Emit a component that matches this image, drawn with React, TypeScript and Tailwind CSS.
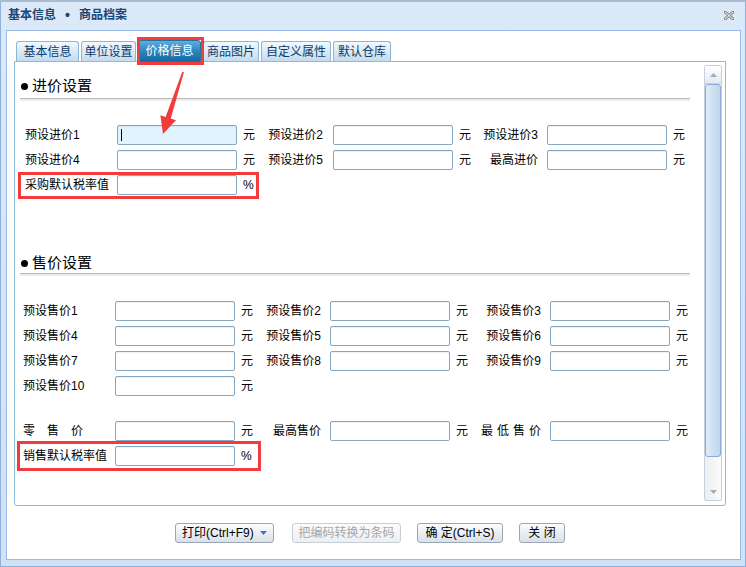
import React from "react";

function Inp({ focused }: { focused?: boolean }) {
  return (
    <div
      className={
        "relative w-[120px] h-[20px] rounded-[2px] border border-[#84a6c0] shadow-[inset_0_1px_1px_rgba(0,0,0,0.06)] " +
        (focused ? "bg-[#e1f4fd]" : "bg-white")
      }
    >
      {focused && <div className="absolute left-[3px] top-[3px] w-[1px] h-[12px] bg-black" />}
    </div>
  );
}

function Mid({ w, unit, label, pr, spaced }: { w: string; unit: string; label: string; pr: string; spaced?: boolean }) {
  return (
    <div className={"flex items-center justify-between h-[20px] " + w}>
      <span className="pl-[6px]">{unit}</span>
      <span className={pr + (spaced ? " tracking-[4px]" : "")}>{label}</span>
    </div>
  );
}

function Heading({ text, mt }: { text: string; mt: string }) {
  return (
    <div className={mt}>
      <div className="flex items-center h-[20px]">
        <div className="ml-[1px] mr-[4px] w-[7px] h-[7px] rounded-full bg-black" />
        <span className="text-[15px] leading-[20px]">{text}</span>
      </div>
      <div className="w-[670px] h-[1px] bg-[#b9b9b9] mt-[2px]" />
      <div className="w-[670px] h-[2px] bg-[#ececec]" />
    </div>
  );
}

function Tab({ label, w, active }: { label: string; w: string; active?: boolean }) {
  if (active)
    return (
      <div
        className={
          "relative z-10 -mb-[1px] h-[22px] flex items-center justify-center rounded-t-[3px] border border-[#2c6e9c] bg-gradient-to-b from-[#5cb0de] via-[#2b86bf] to-[#156ba4] text-white text-[12px] " +
          w
        }
      >
        {label}
      </div>
    );
  return (
    <div
      className={
        "h-[20px] flex items-center justify-center rounded-t-[3px] border border-b-0 border-[#8db5d4] bg-gradient-to-b from-[#f3f8fd] to-[#c3dbf0] text-[#0c3c69] text-[12px] " +
        w
      }
    >
      {label}
    </div>
  );
}

export default function App() {
  return (
    <div className="relative w-[746px] h-[567px] overflow-hidden bg-[#d3e3f5] font-['Liberation_Sans','Noto_Sans_CJK_SC',sans-serif] text-[12px] text-black">
      <div className="h-[2px] bg-[#a9bccf]" />
      <div className="flex flex-col h-[565px] border-x border-b border-[#8eb0d9] bg-gradient-to-b from-[#dce9f8] to-[#d0e2f4] pl-[5px] pr-[4px] pb-[6px]">
        {/* title bar */}
        <div className="h-[28px] flex items-center justify-between pl-[2px] pr-[7px] pb-[2px]">
          <div className="flex items-center font-bold text-[12px] text-[#1a4577]">
            <span>基本信息</span>
            <span className="mx-[9px] text-[14px] leading-none">•</span>
            <span>商品档案</span>
          </div>
          <svg width="10" height="9" viewBox="0 0 10 9">
            <path d="M1 1 L9 8 M9 1 L1 8" stroke="#8c8c8c" strokeWidth="3" strokeLinecap="square" />
            <path d="M1 1 L9 8 M9 1 L1 8" stroke="#f4f4f4" strokeWidth="1" />
          </svg>
        </div>

        {/* white panel */}
        <div className="flex-1 bg-white border border-[#99bbe8] flex flex-col">
          {/* tabs */}
          <div className="mt-[9px] ml-[9px] h-[21px] flex items-end gap-[2px]">
            <Tab label="基本信息" w="w-[63px]" />
            <Tab label="单位设置" w="w-[55px]" />
            <Tab label="价格信息" w="w-[63px]" active />
            <Tab label="商品图片" w="w-[56px]" />
            <Tab label="自定义属性" w="w-[70px]" />
            <Tab label="默认仓库" w="w-[58px]" />
          </div>

          {/* content box */}
          <div className="ml-[7px] w-[712px] h-[445px] border border-[#8fbad6] rounded-b-[3px] flex">
            <div className="flex-1 pl-[5px]">
              <Heading text="进价设置" mt="mt-[14px]" />
              <div className="mt-[24px] flex flex-col gap-[5px]">
                <div className="flex items-center h-[20px] pl-[5px]">
                  <span className="w-[92px]">预设进价1</span>
                  <Inp focused />
                  <Mid w="w-[96px]" unit="元" label="预设进价2" pr="pr-[10px]" />
                  <Inp />
                  <Mid w="w-[94px]" unit="元" label="预设进价3" pr="pr-[9px]" />
                  <Inp />
                  <span className="pl-[6px]">元</span>
                </div>
                <div className="flex items-center h-[20px] pl-[5px]">
                  <span className="w-[92px]">预设进价4</span>
                  <Inp />
                  <Mid w="w-[96px]" unit="元" label="预设进价5" pr="pr-[10px]" />
                  <Inp />
                  <Mid w="w-[94px]" unit="元" label="最高进价" pr="pr-[9px]" />
                  <Inp />
                  <span className="pl-[6px]">元</span>
                </div>
                <div className="flex items-center h-[20px] pl-[5px]">
                  <span className="w-[92px]">采购默认税率值</span>
                  <Inp />
                  <span className="pl-[6px]">%</span>
                </div>
              </div>

              <div className="mt-[58px]">
                <div className="flex items-center h-[20px]">
                  <div className="ml-[1px] mr-[4px] w-[7px] h-[7px] rounded-full bg-black" />
                  <span className="text-[15px] leading-[20px]">售价设置</span>
                </div>
                <div className="w-[670px] h-[1px] bg-[#b9b9b9]" />
                <div className="w-[670px] h-[2px] bg-[#ececec]" />
              </div>

              <div className="mt-[25px] flex flex-col gap-[5px]">
                {[
                  ["预设售价1", "预设售价2", "预设售价3"],
                  ["预设售价4", "预设售价5", "预设售价6"],
                  ["预设售价7", "预设售价8", "预设售价9"],
                ].map((r) => (
                  <div key={r[0]} className="flex items-center h-[20px] pl-[3px]">
                    <span className="w-[92px]">{r[0]}</span>
                    <Inp />
                    <Mid w="w-[95px]" unit="元" label={r[1]} pr="pr-[9px]" />
                    <Inp />
                    <Mid w="w-[100px]" unit="元" label={r[2]} pr="pr-[9px]" />
                    <Inp />
                    <span className="pl-[6px]">元</span>
                  </div>
                ))}
                <div className="flex items-center h-[20px] pl-[3px]">
                  <span className="w-[92px]">预设售价10</span>
                  <Inp />
                  <span className="pl-[6px]">元</span>
                </div>
              </div>

              <div className="mt-[25px] flex flex-col gap-[5px]">
                <div className="flex items-center h-[20px] pl-[3px]">
                  <span className="w-[92px]">零　售　价</span>
                  <Inp />
                  <Mid w="w-[95px]" unit="元" label="最高售价" pr="pr-[9px]" />
                  <Inp />
                  <Mid w="w-[100px]" unit="元" label="最低售价" pr="pr-[5px]" spaced />
                  <Inp />
                  <span className="pl-[6px]">元</span>
                </div>
                <div className="flex items-center h-[20px] pl-[3px]">
                  <span className="w-[92px]">销售默认税率值</span>
                  <Inp />
                  <span className="pl-[6px]">%</span>
                </div>
              </div>
            </div>

            {/* scrollbar */}
            <div className="mt-[3px] mb-[4px] mr-[3px] w-[18px] flex flex-col border border-[#c5d1df] rounded-[2px] bg-gradient-to-r from-[#eeeeee] to-[#fbfbfb]">
              <div className="h-[18px] flex items-center justify-center bg-gradient-to-b from-white to-[#e4eaf2] border-b border-[#c5d1df]">
                <svg width="7" height="4" viewBox="0 0 7 4">
                  <polygon points="3.5,0 7,4 0,4" fill="#a3abb6" />
                </svg>
              </div>
              <div className="h-[373px] rounded-[3px] border border-[#8fa8d8] bg-gradient-to-r from-[#e2edf8] via-[#cde0f2] to-[#c0d6ee]" />
              <div className="flex-1 flex items-end justify-center pb-[6px]">
                <svg width="7" height="4" viewBox="0 0 7 4">
                  <polygon points="0,0 7,0 3.5,4" fill="#a3abb6" />
                </svg>
              </div>
            </div>
          </div>

          {/* buttons */}
          <div className="mt-[17px] pl-[168px] flex items-center">
            <div className="w-[99px] h-[20px] flex items-center justify-between pl-[6px] pr-[6px] border border-[#9aa6b3] rounded-[3px] bg-gradient-to-b from-[#fcfdfe] to-[#d9e0e8]">
              <span>打印(Ctrl+F9)</span>
              <svg width="7" height="4" viewBox="0 0 7 4">
                <polygon points="0,0 7,0 3.5,4" fill="#3f78c0" />
              </svg>
            </div>
            <div className="ml-[18px] w-[109px] h-[20px] flex items-center justify-center border border-[#c8ced5] rounded-[3px] bg-gradient-to-b from-[#fcfcfc] to-[#eceff2] text-[#a6a6a6]">
              把编码转换为条码
            </div>
            <div className="ml-[16px] w-[86px] h-[20px] flex items-center justify-center border border-[#9aa6b3] rounded-[3px] bg-gradient-to-b from-[#fcfdfe] to-[#d9e0e8]">
              确 定(Ctrl+S)
            </div>
            <div className="ml-[16px] w-[46px] h-[20px] flex items-center justify-center border border-[#9aa6b3] rounded-[3px] bg-gradient-to-b from-[#fcfdfe] to-[#d9e0e8]">
              关 闭
            </div>
          </div>
        </div>
      </div>

      {/* annotations */}
      <div className="absolute left-[137px] top-[37px] w-[67px] h-[28px] border-[3px] border-[#f23b3b] z-20" />
      <div className="absolute left-[18px] top-[172px] w-[241px] h-[27px] border-[3px] border-[#f23b3b]" />
      <div className="absolute left-[17px] top-[441px] w-[244px] h-[30px] border-[3px] border-[#f23b3b]" />
      <svg className="absolute left-0 top-0" width="746" height="567" viewBox="0 0 746 567">
        <polygon
          points="182.3,71.8 183.9,72.3 170.8,118.6 176,120.3 163,134 160.4,115.3 165.6,117"
          fill="#f23b3b"
        />
      </svg>
    </div>
  );
}
